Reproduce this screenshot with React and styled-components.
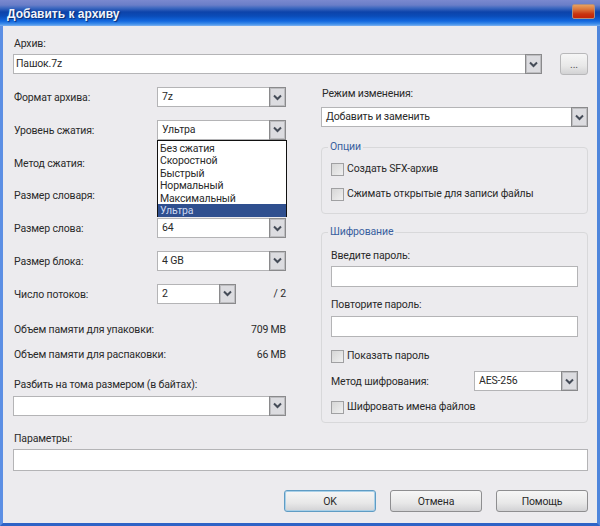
import React from 'react'
import styled, { createGlobalStyle } from 'styled-components'

const GlobalStyle = createGlobalStyle`
  html, body { margin: 0; padding: 0; background: #ecebee; }
  body { font-family: Roboto, "Liberation Sans", Arial, sans-serif; font-size: 10.5px; letter-spacing: -0.15px; color: #2a2a2a; }
  * { box-sizing: border-box; }
`

const Window = styled.div`
  width: 600px;
  height: 526px;
  display: flex;
  flex-direction: column;
  overflow: hidden;
`

const TitleBar = styled.div`
  height: 26px;
  flex: none;
  display: flex;
  align-items: flex-start;
  justify-content: space-between;
  padding: 4px 5px 0 7px;
  background: linear-gradient(180deg, #7a89cf 0, #6a7ec8 5px, #3e69c0 8px, #0d43aa 12px, #0b4cb8 16px, #1267de 21px, #3f8eea 24px, #7fb2f0 26px);
`

const TitleText = styled.div`
  font-family: "Liberation Sans", Arial, sans-serif;
  font-size: 12px;
  font-weight: bold;
  letter-spacing: 0;
  line-height: 20px;
  color: #f2f5fb;
  text-shadow: 1px 1px 1px #0c2a6e;
`

const CloseButton = styled.div`
  width: 23px;
  height: 15px;
  border-radius: 2px;
  border: 1px solid #b08f80;
  background: linear-gradient(180deg, #e8a060 0, #dc7a40 4px, #c83410 9px, #c01c04 15px);
`

const Body = styled.div`
  flex: 1;
  display: flex;
  flex-direction: column;
  padding: 10px 9px 0 10px;
  background: #ecebee;
  border-left: 3px solid #5c8fe4;
  border-right: 3px solid #4f86dc;
  border-bottom: 3px solid #2e63c6;
`

const Label = styled.div`
  height: 14px;
  line-height: 15px;
  padding-left: 1px;
  white-space: nowrap;
`

const ArchiveRow = styled.div`
  display: flex;
  align-items: center;
  justify-content: space-between;
  margin-top: 4px;
`

const Columns = styled.div`
  display: grid;
  grid-template-columns: 273px 267px;
  column-gap: 35px;
  margin-top: 12px;
`

const LeftColumn = styled.div`
  padding-top: 1px;
  display: flex;
  flex-direction: column;
`

const RightColumn = styled.div`
  display: flex;
  flex-direction: column;
`

const ModeRow = styled.div`
  margin-top: 7px;
`

const SettingsList = styled.div`
  display: flex;
  flex-direction: column;
  gap: 12.75px;
`

const SettingRow = styled.div`
  display: grid;
  grid-template-columns: 144px 1fr;
  align-items: center;
`

const ComboShell = styled.div`
  position: relative;
  width: ${(p) => p.$width}px;
  height: 20px;
  flex: none;
  display: flex;
  align-items: center;
  justify-content: space-between;
  background: #fff;
  border: 1px solid #b4b4b6;
  padding-left: ${(p) => p.$inset}px;
  line-height: 18px;
`

const ComboArrow = styled.div`
  width: 17px;
  height: 20px;
  margin: -1px -1px -1px 0;
  flex: none;
  display: flex;
  align-items: center;
  justify-content: center;
  background: #dcdce0;
  border: 1px solid #8a8a8c;
  box-shadow: inset 0 0 0 1px #bdbdc0;
`

const Dropdown = styled.div`
  position: absolute;
  top: 19px;
  left: -1px;
  width: 130px;
  height: 77px;
  padding-top: 1px;
  background: #fff;
  border: 1px solid #111;
  z-index: 2;
`

const DropdownItem = styled.div`
  height: 12.5px;
  line-height: 14px;
  padding-left: 2px;
  color: ${(p) => (p.$selected ? '#cdd8f2' : '#2a2a2a')};
  background: ${(p) => (p.$selected ? '#2f4f8f' : 'transparent')};
`

const ThreadsCell = styled.div`
  display: flex;
  align-items: center;
  justify-content: space-between;
`

const MemoryList = styled.div`
  margin-top: 18px;
  display: flex;
  flex-direction: column;
  gap: 11px;
`

const MemoryRow = styled.div`
  display: flex;
  justify-content: space-between;
  height: 14px;
  line-height: 15px;
  padding-left: 1px;
`

const SplitLabel = styled(Label)`
  margin-top: 16px;
  margin-bottom: 5px;
`

const TextBox = styled.div`
  height: ${(p) => p.$height || 21}px;
  background: #fff;
  border: 1px solid #b4b4b6;
`

const Group = styled.fieldset`
  margin: ${(p) => p.$top}px 0 0;
  padding: ${(p) => p.$pad};
  border: 1px solid #d8d8da;
  border-radius: 4px;
  min-width: 0;
`

const GroupTitle = styled.legend`
  margin-left: -3px;
  padding: 0 2px;
  height: 14px;
  line-height: 14px;
  color: #3a5f9e;
`

const CheckRow = styled.div`
  display: flex;
  align-items: center;
  gap: 3px;
  height: 14px;
  line-height: 16px;
  margin-top: ${(p) => p.$top || 0}px;
  white-space: nowrap;
`

const CheckBox = styled.div`
  width: 13px;
  height: 13px;
  flex: none;
  border: 1px solid #a0a0a2;
  background: linear-gradient(135deg, #d6d6d6, #f0f0f0);
`

const GroupLabel = styled(Label)`
  padding-left: 0;
  margin-top: ${(p) => p.$top || 0}px;
  margin-bottom: ${(p) => p.$bottom || 0}px;
`

const MethodRow = styled.div`
  display: flex;
  align-items: center;
  justify-content: space-between;
  margin-top: 8px;
`

const ParamsLabel = styled(Label)`
  margin-top: 8px;
  margin-bottom: 4px;
`

const Buttons = styled.div`
  display: flex;
  justify-content: flex-end;
  gap: 14px;
  margin-top: 19px;
`

const Button = styled.div`
  width: ${(p) => p.$width}px;
  height: 22px;
  display: flex;
  align-items: center;
  justify-content: center;
  border-radius: 3px;
  border: 1px solid ${(p) => (p.$primary ? '#5f9cc4' : '#8e8e90')};
  box-shadow: ${(p) => (p.$primary ? 'inset 0 0 0 1px #a9d0e8' : 'none')};
  background: linear-gradient(180deg, #f6f6f6, #e8e8e8 60%, #d2d2d4);
`

const BrowseButton = styled(Button)`
  margin: -1px 0;
  border-color: #b8b8ba;
  color: #555;
`

const Chevron = () => (
  <svg width="9" height="7" viewBox="0 0 9 7">
    <path d="M1 1.5 L4.5 5 L8 1.5" fill="none" stroke="#454c58" strokeWidth="2" />
  </svg>
)

const Combo = ({ width, value, inset = 4, children }) => (
  <ComboShell $width={width} $inset={inset}>
    <span>{value}</span>
    <ComboArrow><Chevron /></ComboArrow>
    {children}
  </ComboShell>
)

const levels = ['Без сжатия', 'Скоростной', 'Быстрый', 'Нормальный', 'Максимальный', 'Ультра']

const Check = ({ top, children }) => (
  <CheckRow $top={top}>
    <CheckBox />
    <span>{children}</span>
  </CheckRow>
)

export default function App() {
  return (
    <Window>
      <GlobalStyle />
      <TitleBar>
        <TitleText>Добавить к архиву</TitleText>
        <CloseButton />
      </TitleBar>
      <Body>
        <Label>Архив:</Label>
        <ArchiveRow>
          <Combo width={529} value="Пашок.7z" inset={2} />
          <BrowseButton $width={28}>...</BrowseButton>
        </ArchiveRow>
        <Columns>
          <LeftColumn>
            <SettingsList>
              <SettingRow>
                <Label>Формат архива:</Label>
                <Combo width={129} value="7z" />
              </SettingRow>
              <SettingRow>
                <Label>Уровень сжатия:</Label>
                <Combo width={129} value="Ультра">
                  <Dropdown>
                    {levels.map((level) => (
                      <DropdownItem key={level} $selected={level === 'Ультра'}>{level}</DropdownItem>
                    ))}
                  </Dropdown>
                </Combo>
              </SettingRow>
              <SettingRow>
                <Label>Метод сжатия:</Label>
                <Combo width={129} />
              </SettingRow>
              <SettingRow>
                <Label>Размер словаря:</Label>
                <Combo width={129} />
              </SettingRow>
              <SettingRow>
                <Label>Размер слова:</Label>
                <Combo width={129} value="64" />
              </SettingRow>
              <SettingRow>
                <Label>Размер блока:</Label>
                <Combo width={129} value="4 GB" />
              </SettingRow>
              <SettingRow>
                <Label>Число потоков:</Label>
                <ThreadsCell>
                  <Combo width={79} value="2" />
                  <span>/ 2</span>
                </ThreadsCell>
              </SettingRow>
            </SettingsList>
            <MemoryList>
              <MemoryRow>
                <span>Объем памяти для упаковки:</span>
                <span>709 MB</span>
              </MemoryRow>
              <MemoryRow>
                <span>Объем памяти для распаковки:</span>
                <span>66 MB</span>
              </MemoryRow>
            </MemoryList>
            <SplitLabel>Разбить на тома размером (в байтах):</SplitLabel>
            <Combo width={273} />
          </LeftColumn>
          <RightColumn>
            <Label>Режим изменения:</Label>
            <ModeRow>
              <Combo width={267} value="Добавить и заменить" />
            </ModeRow>
            <Group $top={13} $pad="0 9px 12px">
              <GroupTitle>Опции</GroupTitle>
              <Check top={8}>Создать SFX-архив</Check>
              <Check top={11}>Сжимать открытые для записи файлы</Check>
            </Group>
            <Group $top={11} $pad="0 9px 8px">
              <GroupTitle>Шифрование</GroupTitle>
              <GroupLabel $top={9} $bottom={4}>Введите пароль:</GroupLabel>
              <TextBox />
              <GroupLabel $top={10} $bottom={5}>Повторите пароль:</GroupLabel>
              <TextBox />
              <Check top={12}>Показать пароль</Check>
              <MethodRow>
                <span>Метод шифрования:</span>
                <Combo width={104} value="AES-256" />
              </MethodRow>
              <Check top={9}>Шифровать имена файлов</Check>
            </Group>
          </RightColumn>
        </Columns>
        <ParamsLabel>Параметры:</ParamsLabel>
        <TextBox $height={22} />
        <Buttons>
          <Button $primary $width={92}>OK</Button>
          <Button $width={92}>Отмена</Button>
          <Button $width={92}>Помощь</Button>
        </Buttons>
      </Body>
    </Window>
  )
}
